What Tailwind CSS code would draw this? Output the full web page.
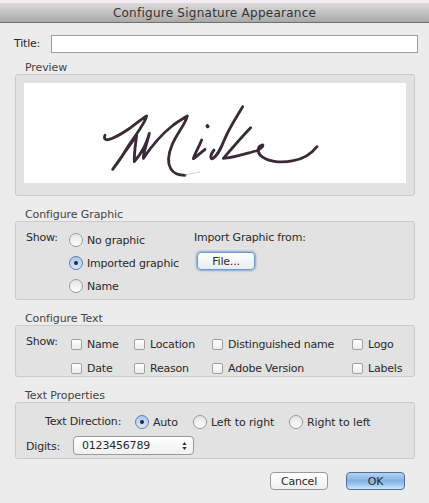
<!DOCTYPE html>
<html>
<head>
<meta charset="utf-8">
<script src="https://cdn.jsdelivr.net/npm/@tailwindcss/browser@4"></script>
</head>
<body class="m-0">
<div class="w-[429px] h-[503px] overflow-hidden bg-[#ececec] text-[#2a2a2a] text-[11px] leading-[14px] tracking-[-0.2px] font-['DejaVu_Sans',sans-serif]">
  <!-- title bar -->
  <div class="h-[3px] bg-[#f3ecf3]"></div>
  <div class="h-[20px] flex items-center justify-center border-b border-[#6f6f6f] bg-gradient-to-b from-[#dcdcdc] to-[#a9a9a9] text-[12px] text-[#333] tracking-[0.25px]">Configure Signature Appearance</div>

  <div class="px-[15px]">
    <div class="flex items-center h-[17px] mt-[12px]">
      <span class="w-[37px] shrink-0 -ml-px">Title:</span>
      <div class="w-[367px] shrink-0 h-[18px] bg-white border border-[#9c9c9c]"></div>
    </div>

    <!-- preview -->
    <div class="ml-[10px] mt-[8px] h-[14px] leading-[16px] tracking-[-0.1px] text-[#444]">Preview</div>
    <div class="w-[400px] h-[122px] p-[8px] rounded-[3px] bg-[#e2e2e2] border border-[#cbcbcb]">
      <svg class="block w-[382px] h-[100px] bg-white" viewBox="-198 -21 1146 300" fill="none" stroke="#3a2a35" stroke-width="8.5" stroke-linecap="round" stroke-linejoin="round">
        <path d="M45 136 C41 146 45 152 58 148 C80 142 100 128 122 113 C140 100 155 86 170 78 C165 100 140 130 115 168 C100 195 82 220 68 238 C90 205 118 170 140 136 C136 165 132 190 133 215 C150 195 168 170 178 130 C172 160 160 185 160 205 C185 168 215 132 250 105 C268 92 282 84 292 78 C285 105 262 128 246 165 C235 192 230 215 242 236 C250 250 265 256 285 256"/>
        <path d="M285 255 L330 246" stroke="#b9b4b8" stroke-width="2"/>
        <path d="M352 108 L353 109" stroke-width="11"/>
        <path d="M335 150 C325 175 315 190 310 206 C320 200 330 190 345 178"/>
        <path d="M458 50 C440 80 420 110 405 145 C395 170 385 195 368 206 C360 208 360 195 372 180"/>
        <path d="M482 113 C460 135 430 170 400 205 C425 205 470 190 498 183 C510 178 522 168 518 165 C505 168 500 180 510 195 C530 215 570 220 610 212 C640 207 665 190 681 170"/>
      </svg>
    </div>

    <!-- configure graphic -->
    <div class="ml-[10px] mt-[11px] h-[14px] leading-[16px] tracking-[-0.1px] text-[#444]">Configure Graphic</div>
    <div class="w-[400px] h-[79px] rounded-[3px] bg-[#e2e2e2] border border-[#cbcbcb] flex pt-[11px]">
      <span class="w-[53px] pl-[10px] h-[14px] -mt-[2px]">Show:</span>
      <div class="w-[125px] flex flex-col gap-[9px]">
        <label class="flex items-start leading-[16px] gap-[4px] h-[14px]"><span class="self-center w-[14px] h-[14px] rounded-full border border-[#9a9a9a] bg-gradient-to-b from-[#e4e4e4] to-white"></span>No graphic</label>
        <label class="flex items-start leading-[16px] gap-[4px] h-[14px]"><span class="self-center w-[14px] h-[14px] rounded-full border border-[#5a80b0] bg-gradient-to-b from-[#a9c8ea] to-[#dbe9f7] flex items-center justify-center"><span class="w-[4px] h-[4px] rounded-full bg-[#1c2c40]"></span></span>Imported graphic</label>
        <label class="flex items-start leading-[16px] gap-[4px] h-[14px]"><span class="self-center w-[14px] h-[14px] rounded-full border border-[#9a9a9a] bg-gradient-to-b from-[#e4e4e4] to-white"></span>Name</label>
      </div>
      <div class="-mt-[2px]">
        <div class="h-[14px]">Import Graphic from:</div>
        <button class="block w-[58px] h-[18px] mt-[7px] ml-[3px] rounded-[4px] border border-[#6f9ccb] bg-gradient-to-b from-white to-[#e9edf2] text-center text-[11px] leading-[15px] shadow-[0_0_2px_1px_#7fa9d6]">File...</button>
      </div>
    </div>

    <!-- configure text -->
    <div class="ml-[10px] mt-[11px] h-[14px] leading-[16px] tracking-[-0.1px] text-[#444]">Configure Text</div>
    <div class="w-[400px] h-[52px] rounded-[3px] bg-[#e2e2e2] border border-[#cbcbcb] flex pt-[11px]">
      <span class="w-[55px] pl-[10px] h-[14px] -mt-[2px]">Show:</span>
      <div class="grid grid-cols-[63px_78px_140px_auto] gap-y-[9px]">
        <label class="flex items-start leading-[16px] gap-[5px] h-[14px]"><span class="self-center w-[11px] h-[11px] rounded-[2px] border border-[#a0a0a0] bg-gradient-to-b from-white to-[#ececec]"></span>Name</label>
        <label class="flex items-start leading-[16px] gap-[5px] h-[14px]"><span class="self-center w-[11px] h-[11px] rounded-[2px] border border-[#a0a0a0] bg-gradient-to-b from-white to-[#ececec]"></span>Location</label>
        <label class="flex items-start leading-[16px] gap-[5px] h-[14px]"><span class="self-center w-[11px] h-[11px] rounded-[2px] border border-[#a0a0a0] bg-gradient-to-b from-white to-[#ececec]"></span>Distinguished name</label>
        <label class="flex items-start leading-[16px] gap-[5px] h-[14px]"><span class="self-center w-[11px] h-[11px] rounded-[2px] border border-[#a0a0a0] bg-gradient-to-b from-white to-[#ececec]"></span>Logo</label>
        <label class="flex items-start leading-[16px] gap-[5px] h-[14px]"><span class="self-center w-[11px] h-[11px] rounded-[2px] border border-[#a0a0a0] bg-gradient-to-b from-white to-[#ececec]"></span>Date</label>
        <label class="flex items-start leading-[16px] gap-[5px] h-[14px]"><span class="self-center w-[11px] h-[11px] rounded-[2px] border border-[#a0a0a0] bg-gradient-to-b from-white to-[#ececec]"></span>Reason</label>
        <label class="flex items-start leading-[16px] gap-[5px] h-[14px]"><span class="self-center w-[11px] h-[11px] rounded-[2px] border border-[#a0a0a0] bg-gradient-to-b from-white to-[#ececec]"></span>Adobe Version</label>
        <label class="flex items-start leading-[16px] gap-[5px] h-[14px]"><span class="self-center w-[11px] h-[11px] rounded-[2px] border border-[#a0a0a0] bg-gradient-to-b from-white to-[#ececec]"></span>Labels</label>
      </div>
    </div>

    <!-- text properties -->
    <div class="ml-[10px] mt-[11px] h-[14px] leading-[16px] tracking-[-0.1px] text-[#444]">Text Properties</div>
    <div class="w-[400px] h-[57px] rounded-[3px] bg-[#e2e2e2] border border-[#cbcbcb] pt-[12px]">
      <div class="flex items-center h-[14px]">
        <span class="w-[119px] pl-[29px]">Text Direction:</span>
        <label class="flex items-start leading-[16px] gap-[4px] h-[14px] w-[58px]"><span class="self-center w-[14px] h-[14px] rounded-full border border-[#5a80b0] bg-gradient-to-b from-[#a9c8ea] to-[#dbe9f7] flex items-center justify-center"><span class="w-[4px] h-[4px] rounded-full bg-[#1c2c40]"></span></span>Auto</label>
        <label class="flex items-start leading-[16px] gap-[4px] h-[14px] w-[96px] tracking-[-0.1px]"><span class="self-center w-[14px] h-[14px] rounded-full border border-[#9a9a9a] bg-gradient-to-b from-[#e4e4e4] to-white"></span>Left to right</label>
        <label class="flex items-start leading-[16px] gap-[4px] h-[14px] tracking-[-0.1px]"><span class="self-center w-[14px] h-[14px] rounded-full border border-[#9a9a9a] bg-gradient-to-b from-[#e4e4e4] to-white"></span>Right to left</label>
      </div>
      <div class="flex items-center h-[19px] mt-[7px]">
        <span class="w-[57px] pl-[10px] pt-[2px]">Digits:</span>
        <div class="w-[121px] h-[19px] pl-[8px] pr-[6px] flex items-center justify-between rounded-[4px] border border-[#9a9a9a] bg-gradient-to-b from-white to-[#f0f0f0]">
          <span>0123456789</span>
          <svg class="w-[5px] h-[8px]" viewBox="0 0 5 9" fill="#333"><path d="M2.5 0 L5 3.5 H0 Z M2.5 9 L0 5.5 H5 Z"/></svg>
        </div>
      </div>
    </div>

    <!-- buttons -->
    <div class="flex justify-end gap-[18px] mt-[13px] pr-[9px]">
      <button class="w-[58px] h-[18px] rounded-[4px] border border-[#9a9a9a] bg-gradient-to-b from-white to-[#f0f0f0] text-center text-[11px] leading-[15px]">Cancel</button>
      <button class="w-[59px] h-[18px] rounded-[4px] border border-[#4f7199] bg-gradient-to-b from-[#b9d3ee] via-[#7fb0e4] to-[#cfe3f8] text-center text-[11px] leading-[15px]">OK</button>
    </div>
  </div>
</div>
</body>
</html>
